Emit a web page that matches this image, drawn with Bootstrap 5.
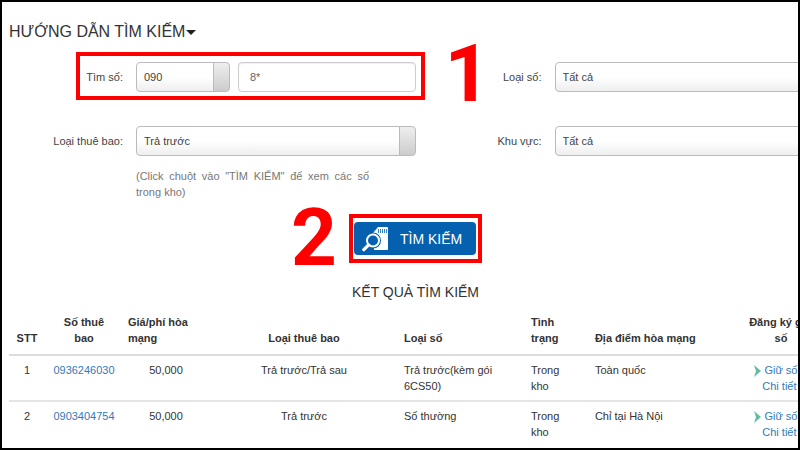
<!DOCTYPE html>
<html lang="vi">
<head>
<meta charset="utf-8">
<meta name="viewport" content="width=device-width, initial-scale=1">
<title>Tìm kiếm số thuê bao</title>
<link href="https://cdn.jsdelivr.net/npm/bootstrap@5.3.0/dist/css/bootstrap.min.css" rel="stylesheet">
<style>
  body { font-family: "Liberation Sans", Arial, sans-serif; font-size: 11px; line-height: 16px; color: #333; background: #fff; }
  a { color: #337ab7; text-decoration: none; }
  .frame { border: 2px solid #000; height: 100vh; padding: 20px 0 0 7px; }
  .sheet { width: calc(100% + 24px); }
  .guide { font-size: 16px; line-height: 20px; color: #333; }
  .guide .caret { border: 5px solid transparent; border-top-color: #222; border-bottom: 0; margin-left: 1px; }
  .criteria { display: grid; grid-template-columns: 50% 1fr; row-gap: 34px; margin-top: 20px; }
  .criterion { display: grid; grid-template-columns: 127px 1fr; align-items: start; }
  .criterion.second { grid-template-columns: 139px 1fr; }
  .criterion > label { text-align: right; padding-right: 13px; line-height: 30px; color: #444; }
  .pick, .entry { height: 30px; width: 100%; min-width: 0; border: 1px solid #bbb; border-radius: 4px; padding: 0 7px; font-size: 11px; color: #444; }
  .pick { appearance: none; background: linear-gradient(#eee, #ccc) right / 15px 100% no-repeat, linear-gradient(#bbb, #bbb) right 15px top / 1px 100% no-repeat, linear-gradient(#fff 50%, #eee); }
  .prefix { width: 94px; }
  .entry { flex: 1; border-color: #ccc; padding-left: 11px; color: #666; box-shadow: inset 0 1px 1px #0001; }
  .hint { width: 233px; color: #777; text-align: justify; margin-top: 12px; }
  .ring { position: absolute; inset: -10px -9px -8px 67px; border: 4px solid red; pointer-events: none; }
  .step { position: absolute; font-family: Roboto, sans-serif; font-size: 80px; line-height: 80px; font-weight: 700; color: red; }
  .step-one { left: 100%; top: -28px; margin-left: 29px; }
  .step-two { right: 100%; top: -20px; margin-right: 16px; }
  .search-bar { margin-top: 14px; }
  .action { border: 4px solid red; padding: 4px 2px 4px 1px; }
  .go { height: 33px; width: 122px; border: 0; border-radius: 4px; background: #0560b0; color: #fff; font-size: 14px; padding: 0 0 0 8px; }
  .go svg { width: 26px; height: 26px; margin-right: 12px; }
  .results-title { font-size: 14px; line-height: 20px; margin: 19px 0 12px; }
  .results { table-layout: fixed; width: 100%; }
  .results th, .results td { padding: 6px 5px; border-bottom: 2px solid #e5e5e5; vertical-align: top; }
  .results th { vertical-align: bottom; padding-top: 0; padding-bottom: 8px; border-bottom-color: #ddd; }
  .results td { height: 46px; }
  .results tr:last-child td { border-bottom: 0; }
  .arrow { width: 8px; height: 12px; }
</style>
<script src="https://cdn.jsdelivr.net/npm/bootstrap@5.3.0/dist/js/bootstrap.bundle.min.js"></script>
</head>
<body>
<main class="frame overflow-hidden">
  <div class="sheet">
    <h1 class="guide fw-normal mb-0 d-flex align-items-center">HƯỚNG DẪN TÌM KIẾM<span class="caret"></span></h1>
    <form>
      <div class="criteria">
        <div class="criterion position-relative">
          <label for="number">Tìm số:</label>
          <div class="d-flex gap-2">
            <select class="pick prefix" aria-label="Đầu số"><option>090</option></select>
            <input class="entry" id="number" type="text" value="8*">
          </div>
          <div class="ring"></div>
          <div class="step step-one">1</div>
        </div>
        <div class="criterion second">
          <label for="kind">Loại số:</label>
          <select class="pick" id="kind"><option>Tất cả</option></select>
        </div>
        <div class="criterion">
          <label for="plan">Loại thuê bao:</label>
          <div>
            <select class="pick d-block" id="plan"><option>Trả trước</option></select>
            <p class="hint mb-0">(Click chuột vào "TÌM KIẾM" để xem các số trong kho)</p>
          </div>
        </div>
        <div class="criterion second">
          <label for="area">Khu vực:</label>
          <select class="pick" id="area"><option>Tất cả</option></select>
        </div>
      </div>
      <div class="search-bar d-flex justify-content-center">
        <div class="action position-relative">
          <div class="step step-two">2</div>
          <button class="go d-flex align-items-center" type="button">
            <svg viewBox="0 0 26 26" aria-hidden="true">
              <path d="M11 7 L16 1 H25 Q26 1 26 2 V23 Q26 24 25 24 H12 Z" fill="#fff"/>
              <path d="M16.500 3v4M18.500 3v4M20.500 3v4M22.500 3v4M24.500 3v4" stroke="#0560b0" stroke-width=".8"/>
              <circle cx="11" cy="14.500" r="8" fill="#0560b0"/>
              <circle cx="11" cy="14.500" r="6" fill="#0560b0" stroke="#fff" stroke-width="2"/>
              <path d="M6.500 19 L1.800 23.700" stroke="#fff" stroke-width="3.200" stroke-linecap="round"/>
            </svg>TÌM KIẾM</button>
        </div>
      </div>
    </form>
    <h2 class="results-title fw-normal text-center">KẾT QUẢ TÌM KIẾM</h2>
    <table class="results">
      <colgroup>
        <col style="width:4.430%"><col style="width:9.590%"><col style="width:10.580%"><col style="width:23.370%"><col style="width:15.620%"><col style="width:7.870%"><col style="width:18.450%"><col>
      </colgroup>
      <thead>
        <tr>
          <th class="text-center">STT</th><th class="text-center">Số thuê<br>bao</th><th>Giá/phí hòa<br>mạng</th><th class="text-center">Loại thuê bao</th><th>Loại số</th><th>Tình<br>trạng</th><th>Địa điểm hòa mạng</th><th class="text-center">Đăng ký giữ<br>số</th>
        </tr>
      </thead>
      <tbody>
        <tr>
          <td class="text-center">1</td><td class="text-center"><a href="#">0936246030</a></td><td class="text-center">50,000</td><td class="text-center">Trả trước/Trả sau</td><td>Trả trước(kèm gói<br>6CS50)</td><td>Trong<br>kho</td><td>Toàn quốc</td>
          <td class="text-center text-nowrap pe-3"><svg class="arrow" viewBox="0 0 8 12" aria-hidden="true"><path d="M1 0 L8 6 L1 12 L3 6Z" fill="#62bda2"/></svg> <a href="#">Giữ số</a><br><a class="ps-2" href="#">Chi tiết</a></td>
        </tr>
        <tr>
          <td class="text-center">2</td><td class="text-center"><a href="#">0903404754</a></td><td class="text-center">50,000</td><td class="text-center">Trả trước</td><td>Số thường</td><td>Trong<br>kho</td><td>Chỉ tại Hà Nội</td>
          <td class="text-center text-nowrap pe-3"><svg class="arrow" viewBox="0 0 8 12" aria-hidden="true"><path d="M1 0 L8 6 L1 12 L3 6Z" fill="#62bda2"/></svg> <a href="#">Giữ số</a><br><a class="ps-2" href="#">Chi tiết</a></td>
        </tr>
      </tbody>
    </table>
  </div>
</main>
</body>
</html>
